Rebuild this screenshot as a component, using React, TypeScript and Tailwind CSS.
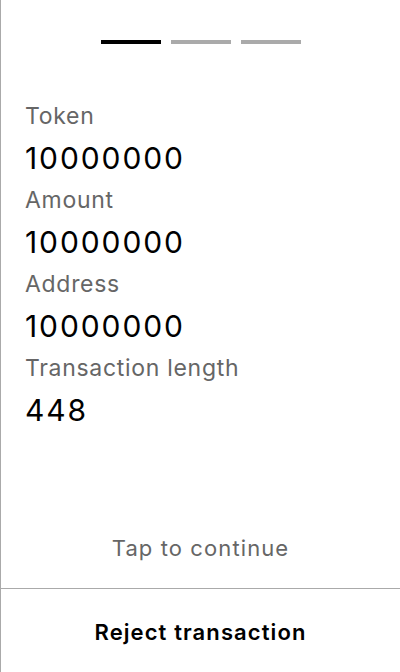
const rows = [
  { label: 'Token', value: '10000000' },
  { label: 'Amount', value: '10000000' },
  { label: 'Address', value: '10000000' },
  { label: 'Transaction length', value: '448' },
];

export default function App() {
  return (
    <div
      className="flex h-[672px] w-[400px] flex-col border-l border-[#aaaaaa] bg-white"
      style={{ fontFamily: 'Inter, "Noto Sans", sans-serif' }}
    >
      <div className="flex justify-center gap-[10px] pt-10">
        <div className="h-1 w-[60px] bg-black" />
        <div className="h-1 w-[60px] bg-[#aaaaaa]" />
        <div className="h-1 w-[60px] bg-[#aaaaaa]" />
      </div>

      <div className="mt-[51px] flex flex-col px-6">
        {rows.map((row) => (
          <div key={row.label} className="flex flex-col">
            <span className="text-[23px] leading-[42px] tracking-[0.7px] text-[#666666]">{row.label}</span>
            <span className="text-[30px] leading-[42px] tracking-[1.9px] text-black">{row.value}</span>
          </div>
        ))}
      </div>

      <div className="flex-1" />

      <div className="pb-[25px] text-center text-[22px] leading-[30px] tracking-[1.1px] text-[#666666]">
        Tap to continue
      </div>

      <button className="flex h-[84px] w-full items-center justify-center border-t border-[#aaaaaa] pt-[3px] text-[22px] font-semibold tracking-[1.1px] text-black">
        Reject transaction
      </button>
    </div>
  );
}
